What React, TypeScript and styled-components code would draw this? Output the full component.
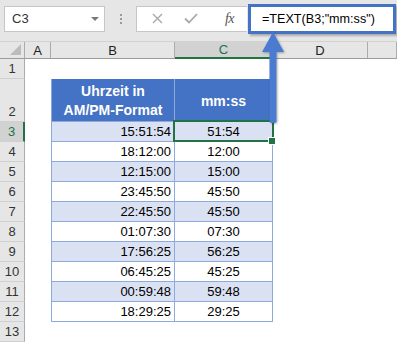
import React from "react";
import styled, { createGlobalStyle, css } from "styled-components";

const GlobalStyle = createGlobalStyle`
  html, body { margin: 0; padding: 0; background: #ffffff; }
  body { font-family: "Liberation Sans", Arial, sans-serif; }
  * { box-sizing: border-box; }
`;

const GREEN = "#217346";
const TABLE_BORDER = "#8EA9DB";

const Screen = styled.div`
  position: relative;
  width: 397px;
  height: 343px;
  overflow: hidden;
  background: #ffffff;
`;

const TopBar = styled.div`
  display: flex;
  align-items: center;
  height: 42px;
  padding: 0 1px 4px 4px;
  background: #e6e6e6;
  border-bottom: 1px solid #d2d2d2;
`;

const NameBox = styled.div`
  position: relative;
  display: flex;
  align-items: center;
  width: 101px;
  height: 26px;
  padding-left: 7px;
  background: #ffffff;
  border: 1px solid #c6c6c6;
  font-size: 13px;
  color: #333333;
`;

const DropTriangle = styled.span`
  margin-left: auto;
  margin-right: 5px;
  width: 0;
  height: 0;
  border-left: 4px solid transparent;
  border-right: 4px solid transparent;
  border-top: 4px solid #7a7a7a;
`;

const Dots = styled.div`
  display: flex;
  flex-direction: column;
  gap: 2px;
  width: 31px;
  align-items: center;
  span {
    width: 2px;
    height: 2px;
    background: #9a9a9a;
  }
`;

const FuncBox = styled.div`
  display: flex;
  align-items: center;
  width: 111px;
  height: 26px;
  padding: 0 13px 0 14px;
  background: #ffffff;
  border: 1px solid #c6c6c6;
  border-right: none;
`;

const IconSlot = styled.span<{ $w: number }>`
  display: flex;
  align-items: center;
  justify-content: center;
  width: ${(p) => p.$w}px;
  height: 20px;
`;

const Fx = styled.span`
  margin-left: auto;
  font-family: "Liberation Serif", "Times New Roman", serif;
  font-style: italic;
  font-size: 14px;
  color: #555555;
  letter-spacing: -0.5px;
`;

const FormulaBox = styled.div`
  flex: 1;
  display: flex;
  align-items: center;
  height: 30px;
  margin-left: 1px;
  padding-left: 11px;
  background: #ffffff;
  border: 3px solid #4472c4;
  box-shadow: 2px 2px 2px rgba(0, 0, 0, 0.25);
  font-size: 12.6px;
  color: #000000;
`;

const Sheet = styled.div`
  display: grid;
  grid-template-columns: 25px 26px 124px 98px 95px 1fr;
  grid-template-rows: 17px 20px 43px repeat(11, 20px);
`;

const Corner = styled.div`
  position: relative;
  background: #e6e6e6;
  border-right: 1px solid #ababab;
  border-bottom: 1px solid #9b9b9b;
  &::after {
    content: "";
    position: absolute;
    right: 3px;
    bottom: 3px;
    width: 0;
    height: 0;
    border-left: 11px solid transparent;
    border-bottom: 11px solid #bcbcbc;
  }
`;

const ColHeader = styled.div<{ $active?: boolean }>`
  display: flex;
  align-items: center;
  justify-content: center;
  background: ${(p) => (p.$active ? "#d2d2d2" : "#e6e6e6")};
  border-right: 1px solid #ababab;
  border-bottom: ${(p) => (p.$active ? `2px solid ${GREEN}` : "1px solid #9b9b9b")};
  font-size: 13px;
  color: ${(p) => (p.$active ? GREEN : "#222222")};
`;

const RowHeader = styled.div<{ $active?: boolean }>`
  display: flex;
  align-items: flex-end;
  justify-content: center;
  padding-bottom: 2px;
  background: ${(p) => (p.$active ? "#d2d2d2" : "#e6e6e6")};
  border-right: ${(p) => (p.$active ? `2px solid ${GREEN}` : "1px solid #ababab")};
  border-bottom: 1px solid #d0d0d0;
  font-size: 13px;
  color: ${(p) => (p.$active ? GREEN : "#333333")};
`;

const Blank = styled.div``;

const TableCell = styled.div<{
  $kind: "head" | "band" | "plain";
  $first?: boolean;
  $align: "right" | "center";
  $selected?: boolean;
}>`
  position: relative;
  display: flex;
  align-items: center;
  justify-content: ${(p) => (p.$align === "right" ? "flex-end" : "center")};
  padding-right: ${(p) => (p.$align === "right" ? "3px" : "0")};
  border-right: 1px solid ${TABLE_BORDER};
  border-bottom: 1px solid ${TABLE_BORDER};
  ${(p) => p.$first && css`border-left: 1px solid ${TABLE_BORDER};`}
  font-size: 13px;
  color: #000000;
  ${(p) =>
    p.$kind === "head" &&
    css`
      background: #4472c4;
      color: #ffffff;
      font-weight: bold;
      font-size: 14px;
      line-height: 19px;
      text-align: center;
      padding-top: 2px;
    `}
  ${(p) => p.$kind === "band" && css`background: #d9e1f2;`}
  ${(p) => p.$kind === "plain" && css`background: #ffffff;`}
  ${(p) =>
    p.$selected &&
    css`
      &::after {
        content: "";
        position: absolute;
        left: -2px;
        top: -2px;
        right: -2px;
        bottom: -1px;
        border: 2px solid ${GREEN};
        pointer-events: none;
      }
      &::before {
        content: "";
        position: absolute;
        right: -4px;
        bottom: -4px;
        width: 6px;
        height: 6px;
        background: ${GREEN};
        border: 1px solid #ffffff;
        z-index: 2;
      }
    `}
`;

const ArrowLayer = styled.svg`
  position: absolute;
  left: 260px;
  top: 31px;
  filter: drop-shadow(1px 1px 1px rgba(0, 0, 0, 0.3));
`;

const rows: [string, string][] = [
  ["15:51:54", "51:54"],
  ["18:12:00", "12:00"],
  ["12:15:00", "15:00"],
  ["23:45:50", "45:50"],
  ["22:45:50", "45:50"],
  ["01:07:30", "07:30"],
  ["17:56:25", "56:25"],
  ["06:45:25", "45:25"],
  ["00:59:48", "59:48"],
  ["18:29:25", "29:25"],
];

export default function App() {
  return (
    <>
      <GlobalStyle />
      <Screen>
        <TopBar>
          <NameBox>
            C3
            <DropTriangle />
          </NameBox>
          <Dots>
            <span />
            <span />
            <span />
          </Dots>
          <FuncBox>
            <IconSlot $w={12}>
              <svg width="11" height="11" viewBox="0 0 11 11">
                <path d="M1 1 L10 10 M10 1 L1 10" stroke="#a8a8a8" strokeWidth="1.4" fill="none" />
              </svg>
            </IconSlot>
            <IconSlot $w={56}>
              <svg width="14" height="11" viewBox="0 0 14 11">
                <path d="M1 5.5 L5 9.5 L13 1" stroke="#a8a8a8" strokeWidth="1.8" fill="none" />
              </svg>
            </IconSlot>
            <Fx>fx</Fx>
          </FuncBox>
          <FormulaBox>=TEXT(B3;"mm:ss")</FormulaBox>
        </TopBar>
        <Sheet>
          <Corner />
          <ColHeader>A</ColHeader>
          <ColHeader>B</ColHeader>
          <ColHeader $active>C</ColHeader>
          <ColHeader>D</ColHeader>
          <ColHeader />

          <RowHeader>1</RowHeader>
          <Blank />
          <Blank />
          <Blank />
          <Blank />
          <Blank />

          <RowHeader>2</RowHeader>
          <Blank />
          <TableCell $kind="head" $first $align="center">
            Uhrzeit in
            <br />
            AM/PM-Format
          </TableCell>
          <TableCell $kind="head" $align="center">
            mm:ss
          </TableCell>
          <Blank />
          <Blank />

          {rows.map(([b, c], i) => (
            <React.Fragment key={i}>
              <RowHeader $active={i === 0}>{i + 3}</RowHeader>
              <Blank />
              <TableCell $kind={i % 2 === 0 ? "band" : "plain"} $first $align="right">
                {b}
              </TableCell>
              <TableCell $kind={i % 2 === 0 ? "band" : "plain"} $align="center" $selected={i === 0}>
                {c}
              </TableCell>
              <Blank />
              <Blank />
            </React.Fragment>
          ))}

          <RowHeader>13</RowHeader>
          <Blank />
          <Blank />
          <Blank />
          <Blank />
          <Blank />
        </Sheet>
        <ArrowLayer width="28" height="96" viewBox="0 0 28 96">
          <polygon points="13,1 2,21 24,21" fill="#4a7bd0" />
          <rect x="9.5" y="19" width="7" height="73" rx="2" fill="#4a7bd0" />
        </ArrowLayer>
      </Screen>
    </>
  );
}
